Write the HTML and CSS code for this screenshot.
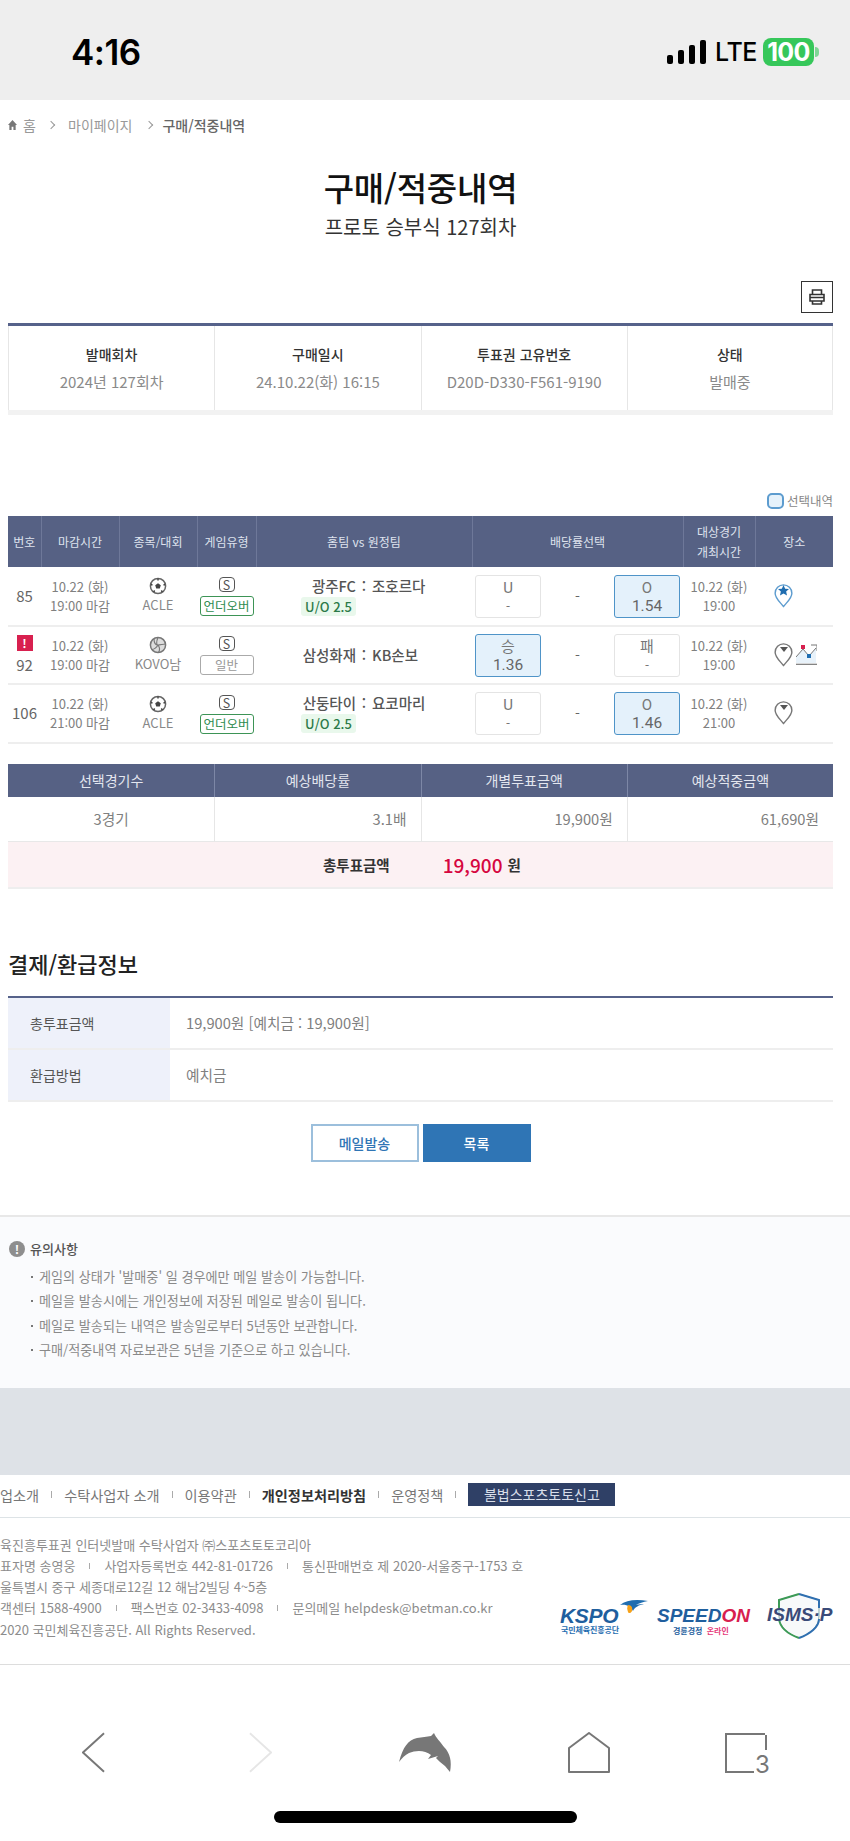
FILE: index.html
```html
<!DOCTYPE html>
<html lang="ko">
<head>
<meta charset="utf-8">
<title>구매/적중내역</title>
<link rel="stylesheet" href="styles.css">
</head>
<body>
<svg class="defs" width="0" height="0" aria-hidden="true">
  <symbol id="ball" viewBox="0 0 18 18">
    <circle cx="9" cy="9" r="7.6" fill="#fff" stroke="#666" stroke-width="1.5"/>
    <path d="M9 6.2l2.8 2-1 3.2H7.2l-1-3.2z" fill="#444"/>
    <path d="M9 1.6v1.8M1.8 7.5l1.7.5M16.2 7.5l-1.7.5M4.6 15l1.1-1.5M13.4 15l-1.1-1.5" stroke="#444" stroke-width="1.5"/>
  </symbol>
  <symbol id="pin" viewBox="0 0 20 25">
    <path d="M10 23.5C6 18.5 1.2 15 1.2 9.6a8.8 8.8 0 0 1 17.6 0C18.800 15 14 18.500 10 23.5z" fill="#fff" stroke="currentColor" stroke-width="1.5"/>
  </symbol>
</svg>

<header class="status">
  <span class="clock">4:16</span>
  <div class="status-right">
    <span class="signal"><i class="b1"></i><i class="b2"></i><i class="b3"></i><i class="b4"></i></span>
    <span class="lte">LTE</span>
    <span class="battery">100</span>
    <span class="nub"></span>
  </div>
</header>

<main class="page">
  <nav class="crumbs">
    <svg class="home" viewBox="0 0 10 11"><path d="M5 0l5 5.500H8.500V11H6V7.500H4V11H1.500V5.500H0z" fill="#777"/></svg>
    <span class="crumb-home">홈</span>
    <span class="chev"></span>
    <span>마이페이지</span>
    <span class="chev chev-2"></span>
    <strong>구매/적중내역</strong>
  </nav>

  <h1 class="title">구매/적중내역</h1>
  <p class="subtitle">프로토 승부식 127회차</p>

  <div class="print-row">
    <button class="print" aria-label="인쇄">
      <svg viewBox="0 0 18 18" width="18" height="18"><path d="M4.500 6V2h9v4M2 6.500h14V13H2zM2 9.500h14M4.500 13v3h9v-3" fill="none" stroke="#333" stroke-width="1.600"/></svg>
    </button>
  </div>

  <section class="info">
    <div class="info-cell"><b>발매회차</b><span>2024년 127회차</span></div>
    <div class="info-cell"><b>구매일시</b><span>24.10.22(화) 16:15</span></div>
    <div class="info-cell"><b>투표권 고유번호</b><span>D20D-D330-F561-9190</span></div>
    <div class="info-cell"><b>상태</b><span>발매중</span></div>
  </section>

  <div class="legend"><i class="legend-box"></i>선택내역</div>

  <table class="games">
    <colgroup>
      <col class="c1"><col class="c2"><col class="c3"><col class="c4"><col class="c5"><col class="c6"><col class="c7"><col class="c8">
    </colgroup>
    <thead>
      <tr><th>번호</th><th>마감시간</th><th>종목/대회</th><th>게임유형</th><th>홈팀 vs 원정팀</th><th>배당률선택</th><th>대상경기<br>개최시간</th><th>장소</th></tr>
    </thead>
    <tbody>
      <tr>
        <td class="num">85</td>
        <td>10.22 (화)<br>19:00 마감</td>
        <td class="sport"><svg class="sport-icon"><use href="#ball"/></svg><span>ACLE</span></td>
        <td class="type"><span class="s-mark">S</span><span class="tag tag-green">언더오버</span></td>
        <td class="match">
          <div class="teams strong-line"><span class="home-team">광주FC</span><span class="colon">:</span><span>조호르다</span></div>
          <span class="uo">U/O 2.5</span>
        </td>
        <td><div class="odds"><div class="odd"><span>U</span><small>-</small></div><span class="dash">-</span><div class="odd on"><span>O</span><em>1.54</em></div></div></td>
        <td>10.22 (화)<br>19:00</td>
        <td class="place"><svg class="pin blue"><use href="#pin"/></svg><svg class="star" viewBox="0 0 10 10"><path d="M5 0l1.500 3.300 3.500.4-2.600 2.300.8 3.500L5 7.700 1.800 9.500l.8-3.500L0 3.700l3.500-.4z" fill="#1f6db0"/></svg></td>
      </tr>
      <tr>
        <td class="num"><span class="alert">!</span>92</td>
        <td>10.22 (화)<br>19:00 마감</td>
        <td class="sport">
          <svg class="sport-icon" viewBox="0 0 18 18"><circle cx="9" cy="9" r="7.600" fill="#ddd" stroke="#777" stroke-width="1.500"/><path d="M9 1.500C7 6 7.500 9 9 9s6-1 7.500-1M9 9c-1 2-4 5-6.500 4.500M9 9c1.500 2 2 5 .5 7.500M5 3c0 3 1 6 4 6" fill="none" stroke="#777" stroke-width="1.100"/></svg>
          <span>KOVO남</span>
        </td>
        <td class="type"><span class="s-mark">S</span><span class="tag tag-gray">일반</span></td>
        <td class="match"><div class="teams"><span class="home-team">삼성화재</span><span class="colon">:</span><span>KB손보</span></div></td>
        <td><div class="odds"><div class="odd on"><span>승</span><em>1.36</em></div><span class="dash">-</span><div class="odd"><span>패</span><small>-</small></div></div></td>
        <td>10.22 (화)<br>19:00</td>
        <td class="place">
          <svg class="pin"><use href="#pin"/></svg><svg class="tri" viewBox="0 0 8 5"><path d="M0 0h8L4 5z" fill="#555"/></svg>
          <svg class="chart" viewBox="0 0 21 21"><path d="M0 19V13L7 5l6 7 7-8v15z" fill="#e8f2fa"/><path d="M0 13L7 5l6 7 7-8M15 1h6v6" fill="none" stroke="#777" stroke-width="1"/><path d="M0 20.300h21" stroke="#777" stroke-width="1.200"/><rect x="5" y="1" width="4" height="4" fill="#d8204f"/><rect x="11" y="10" width="4" height="4" fill="#1f6db0"/></svg>
        </td>
      </tr>
      <tr>
        <td class="num">106</td>
        <td>10.22 (화)<br>21:00 마감</td>
        <td class="sport"><svg class="sport-icon"><use href="#ball"/></svg><span>ACLE</span></td>
        <td class="type"><span class="s-mark">S</span><span class="tag tag-green">언더오버</span></td>
        <td class="match">
          <div class="teams strong-line"><span class="home-team">산둥타이</span><span class="colon">:</span><span>요코마리</span></div>
          <span class="uo">U/O 2.5</span>
        </td>
        <td><div class="odds"><div class="odd"><span>U</span><small>-</small></div><span class="dash">-</span><div class="odd on"><span>O</span><em>1.46</em></div></div></td>
        <td>10.22 (화)<br>21:00</td>
        <td class="place"><svg class="pin"><use href="#pin"/></svg><svg class="tri" viewBox="0 0 8 5"><path d="M0 0h8L4 5z" fill="#555"/></svg></td>
      </tr>
    </tbody>
  </table>

  <section class="summary">
    <div class="sum-head">선택경기수</div><div class="sum-head">예상배당률</div><div class="sum-head">개별투표금액</div><div class="sum-head">예상적중금액</div>
    <div class="sum-val center">3경기</div><div class="sum-val">3.1배</div><div class="sum-val">19,900원</div><div class="sum-val">61,690원</div>
    <div class="total"><b class="total-label">총투표금액</b><span class="total-num">19,900</span><b>원</b></div>
  </section>

  <h2 class="sec-title">결제/환급정보</h2>
  <section class="pay">
    <div class="pay-label">총투표금액</div><div class="pay-val">19,900원 [예치금 : 19,900원]</div>
    <div class="pay-label">환급방법</div><div class="pay-val">예치금</div>
  </section>

  <div class="actions">
    <button class="btn btn-line">메일발송</button>
    <button class="btn btn-fill">목록</button>
  </div>
</main>

<section class="notice">
  <h3 class="notice-title"><i class="notice-icon">!</i>유의사항</h3>
  <ul class="notice-list">
    <li>게임의 상태가 '발매중' 일 경우에만 메일 발송이 가능합니다.</li>
    <li>메일을 발송시에는 개인정보에 저장된 메일로 발송이 됩니다.</li>
    <li>메일로 발송되는 내역은 발송일로부터 5년동안 보관합니다.</li>
    <li>구매/적중내역 자료보관은 5년을 기준으로 하고 있습니다.</li>
  </ul>
</section>

<div class="gap"></div>

<footer class="footer">
  <nav class="foot-nav">
    <span>업소개</span><i></i><span>수탁사업자 소개</span><i></i><span>이용약관</span><i></i><b>개인정보처리방침</b><i></i><span>운영정책</span><i></i>
    <span class="report">불법스포츠토토신고</span>
  </nav>
  <div class="foot-body">
    <div class="foot-text">
      <p>육진흥투표권 인터넷발매 수탁사업자 ㈜스포츠토토코리아</p>
      <p>표자명 송영웅<i></i>사업자등록번호 442-81-01726<i></i>통신판매번호 제 2020-서울중구-1753 호</p>
      <p>울특별시 중구 세종대로12길 12 해남2빌딩 4~5층</p>
      <p>객센터 1588-4900<i></i>팩스번호 02-3433-4098<i></i>문의메일 helpdesk@betman.co.kr</p>
      <p>2020 국민체육진흥공단. All Rights Reserved.</p>
    </div>
    <div class="logos">
      <div class="kspo">
        <svg class="kspo-wing" viewBox="0 0 28 14"><path d="M0 6C6 1 16 0 28 2c-5 1-9 2-12 4 3-1 6-1 8-1-5 1-9 3-11 7C11 8 7 5 0 6z" fill="#1f6db0"/><path d="M8 6c3 0 5 2 4 6-1 2-3 3-4 1-1-3-1-5 0-7z" fill="#f6a21a"/></svg>
        <span class="kspo-name">KSPO</span>
        <span class="kspo-sub">국민체육진흥공단</span>
      </div>
      <div class="speedon">
        <span class="speedon-name">SPEED<em>ON</em></span>
        <span class="speedon-sub">경륜경정 <em>온라인</em></span>
      </div>
      <div class="isms">
        <svg class="shield" viewBox="0 0 44 46"><path d="M22 1l20 6v16c0 11-9 18-20 22C11 41 2 34 2 23V7z" fill="#f7f9fa" stroke="#8aa" stroke-width="1"/><path d="M22 1l20 6v8" fill="none" stroke="#2f6fb0" stroke-width="2"/><path d="M2 15V7l20-6M2 26c1 9 9 15 20 19" fill="none" stroke="#3c9a56" stroke-width="2"/><path d="M22 45c11-4 20-11 20-19" fill="none" stroke="#2f6fb0" stroke-width="2"/></svg>
        <span class="isms-name">ISMS·P</span>
      </div>
    </div>
  </div>
</footer>

<nav class="browser">
  <svg class="tool tool-back" viewBox="0 0 24 42"><path d="M23 1L1 21l22 20" fill="none" stroke="#777" stroke-width="2"/></svg>
  <svg class="tool tool-fwd" viewBox="0 0 24 42"><path d="M1 1l22 20L1 41" fill="none" stroke="#e6e6e6" stroke-width="2"/></svg>
  <svg class="tool tool-dolphin" viewBox="0 0 54 39"><path d="M1 29C5 14 10 7 19 5c5-1 10-1 14-2l3-3c2 5 6 8 10 14 6 6 8 14 6 25l-5-6c-4-3-7-6-9-8l2-2-10 3 3-4c-6-5-15-5-22-2-4 2-7 5-10 9z" fill="#777"/></svg>
  <svg class="tool tool-home" viewBox="0 0 42 41"><path d="M21 1L1 16v24h40V16z" fill="none" stroke="#777" stroke-width="2" stroke-linejoin="round"/></svg>
  <div class="tool-tabs"><span class="tabs-num">3</span></div>
</nav>
<div class="indicator-row"><span class="indicator"></span></div>
</body>
</html>
```

FILE: styles.css
```css
* { box-sizing: border-box; }
html, body { margin: 0; padding: 0; }
body {
  width: 850px;
  height: 1841px;
  overflow: hidden;
  background: #fff;
  font-family: "Noto Sans CJK KR", "Noto Sans", sans-serif;
  color: #777;
  font-size: 13px;
}
.defs { position: absolute; }
p, h1, h2, h3, ul { margin: 0; padding: 0; }
button { font-family: inherit; cursor: pointer; }

/* status bar */
.status {
  height: 100px;
  background: #eeeeee;
  display: flex;
  justify-content: space-between;
  padding: 38px 31px 0 71px;
  color: #000;
}
.clock { font: 600 35px/28px Inter, sans-serif; letter-spacing: -0.5px; }
.status-right { display: flex; align-items: flex-start; height: 28px; }
.signal { display: flex; align-items: flex-end; gap: 5px; height: 24px; margin-top: 2px; width: 39px; }
.signal i { display: block; width: 6px; background: #000; border-radius: 2px; }
.b1 { height: 9px; }
.b2 { height: 14px; }
.b3 { height: 19px; }
.b4 { height: 24px; }
.lte { font: 500 25px/28px Inter, sans-serif; margin-left: 9px; width: 48px; letter-spacing: -0.4px; }
.battery {
  width: 51px; height: 28px; background: #36c75a; border-radius: 8px;
  color: #fff; font: 700 25px/28px Inter, sans-serif; text-align: center; letter-spacing: -0.6px;
}
.nub { width: 4px; height: 10px; margin-top: 9px; margin-left: 1px; background: #7fd695; border-radius: 0 4px 4px 0; }

/* page */
.page { padding: 0 17px 0 8px; }
.crumbs { height: 50px; display: flex; align-items: center; font-size: 14px; color: #999; }
.crumbs strong { font-weight: 500; color: #666; }
.home { width: 9px; height: 10px; margin-right: 6px; }
.crumb-home { width: 13px; }
.chev {
  width: 6px; height: 6px; border-top: 1px solid #999; border-right: 1px solid #999;
  transform: rotate(45deg); margin: 0 14px 0 12px;
}
.chev-2 { margin: 0 10px 0 14px; }
.title { font-size: 33px; line-height: 40px; font-weight: 500; color: #111; text-align: center; margin-top: 17px; letter-spacing: -0.2px; }
.subtitle { font-size: 20px; line-height: 28px; color: #333; text-align: center; margin-top: 6px; }
.print-row { display: flex; justify-content: flex-end; margin-top: 40px; }
.print {
  width: 32px; height: 32px; padding: 0; background: #fff; border: 1px solid #333;
  display: flex; align-items: center; justify-content: center;
}
.info {
  margin-top: 10px; display: grid; grid-template-columns: repeat(4, 1fr);
  border-top: 3px solid #56628a; border-bottom: 5px solid #f2f2f2; height: 92px;
}
.info-cell {
  border-left: 1px solid #e6e6e6; display: flex; flex-direction: column; align-items: center;
  padding-top: 17px;
}
.info-cell:last-child { border-right: 1px solid #e6e6e6; }
.info-cell b { font-size: 14px; line-height: 22px; font-weight: 500; color: #333; }
.info-cell span { font-size: 15px; line-height: 22px; color: #8a8a8a; margin-top: 6px; }
.legend {
  margin-top: 78px; height: 16px; display: flex; justify-content: flex-end; align-items: center;
  font-size: 12.5px; color: #888; line-height: 16px;
}
.legend-box {
  width: 17px; height: 16px; border: 2px solid #5d9ccf; background: #e6f2fb; border-radius: 5px; margin-right: 3px;
}

/* games table */
.games { width: 825px; table-layout: fixed; border-collapse: collapse; margin-top: 7px; font-size: 13px; line-height: 19px; }
.c1 { width: 33px; } .c2 { width: 78px; } .c3 { width: 78px; } .c4 { width: 59px; }
.c5 { width: 216px; } .c6 { width: 211px; } .c7 { width: 72px; } .c8 { width: 78px; }
.games th {
  height: 51px; background: #566184; color: #dfe3ee; font-weight: 400; font-size: 12px; line-height: 20px;
  border-left: 1px solid #6e7899; padding: 0;
}
.games th:first-child { border-left: 0; }
.games td { height: 58.500px; padding: 0; text-align: center; border-bottom: 2px solid #eeeeee; color: #808080; }
.games td.num { font-size: 15px; color: #666; line-height: 20px; }
.alert {
  display: block; width: 16px; height: 16px; background: #d8204f; color: #fff; font-weight: 700; font-size: 12px;
  line-height: 16px; margin: 0 auto 4px;
}
.sport-icon { display: block; width: 18px; height: 18px; margin: 0 auto 1px; }
.sport span { display: block; line-height: 18px; color: #888; }
.games td.type { line-height: 0; padding-top: 2px; }
.s-mark {
  display: block; width: 16px; height: 15px; margin: 0 auto 4px; border: 1px solid #555; border-radius: 4px;
  font-size: 12.5px; line-height: 13px; color: #555;
}
.tag { display: block; width: 54px; height: 20px; margin: 0 auto; border-radius: 3px; font-size: 12.5px; line-height: 17px; background: #fff; }
.tag-green { border: 1.500px solid #3d9456; color: #2e8b50; }
.tag-gray { border: 1.500px solid #aaaaaa; color: #999; }
.teams { display: grid; grid-template-columns: 1fr 16px 1fr; font-size: 14.5px; font-weight: 500; color: #555; line-height: 20px; text-align: left; }
.home-team { text-align: right; }
.colon { text-align: center; }
.uo {
  display: block; width: 55px; height: 19px; margin: 1px 0 0 45px; background: #e9f8ec; color: #2c7a49; border-radius: 3px;
  font-size: 13px; font-weight: 500; line-height: 19px; text-align: center;
}
.odds { display: flex; justify-content: space-between; align-items: center; padding: 1px 3px 0; }
.odd {
  width: 66px; height: 43px; border: 1px solid #e4e4e4; border-radius: 3px; background: #fff;
  display: flex; flex-direction: column; align-items: center; color: #777;
  font-family: Roboto, "Noto Sans CJK KR", sans-serif; font-size: 15px; line-height: 18px; padding-top: 3px;
}
.odd small { font-size: 13px; line-height: 16px; margin-top: 1px; }
.odd em { font-style: normal; line-height: 18px; font-size: 15.500px; color: #666; }
.odd.on { border: 1.500px solid #4f94c8; background: #e4f1fb; }
.dash { color: #666; font-size: 14px; }
.games td.place { position: relative; text-align: left; padding-left: 19px; line-height: 0; font-size: 0; }
.pin { display: inline-block; width: 19px; height: 24px; color: #777; vertical-align: middle; }
.pin.blue { color: #5d9ccf; }
.star { position: absolute; left: 23px; top: 18px; width: 11px; height: 11px; }
.tri { position: absolute; left: 25px; top: 20px; width: 8px; height: 5px; }
.chart { width: 21px; height: 21px; margin-left: 3px; vertical-align: middle; }

/* summary */
.summary { margin-top: 20px; display: grid; grid-template-columns: repeat(4, 1fr); }
.sum-head {
  height: 33px; background: #566184; color: #e3e6ef; font-size: 14px; line-height: 33px; text-align: center;
  border-left: 1px solid #7d87a6;
}
.sum-head:first-child { border-left: 0; }
.sum-val {
  height: 45px; line-height: 44px; font-size: 14.700px; text-align: right; padding-right: 14px; color: #808080;
  border-left: 1px solid #e6e6e6; border-bottom: 1px solid #e8e8e8;
}
.sum-val.center { text-align: center; padding-right: 0; border-left: 0; }
.total {
  grid-column: 1 / -1; height: 47px; background: #fcf1f3; border-bottom: 2px solid #eeeeee;
  display: flex; align-items: center; padding-left: 315px; font-size: 14.500px; color: #333;
}
.total b { font-weight: 700; }
.total-num { color: #d6063f; font-size: 19px; font-weight: 500; margin: 0 5px 0 53px; }

/* payment */
.sec-title { margin-top: 59px; font-size: 22px; line-height: 30px; font-weight: 500; color: #222; }
.pay { margin-top: 18px; display: grid; grid-template-columns: 162px 1fr; border-top: 2px solid #56628a; }
.pay-label, .pay-val { height: 52px; line-height: 50px; font-size: 14px; border-bottom: 2px solid #eeeeee; }
.pay-label { background: #eef1fa; color: #555; padding-left: 22px; }
.pay-val { color: #808080; padding-left: 16px; font-size: 14.700px; }
.actions { margin-top: 22px; display: flex; justify-content: center; gap: 4px; }
.btn { width: 108px; height: 38px; font-size: 14px; font-weight: 500; padding: 0; }
.btn-line { background: #fff; border: 2px solid #9cbfdc; color: #2f75b5; }
.btn-fill { background: #2f75b5; border: 0; color: #fff; }

/* notice */
.notice { margin-top: 53px; height: 173px; background: #fafbfd; border-top: 2px solid #e8e8e8; padding: 22px 0 0 9px; }
.notice-title { display: flex; align-items: center; font-size: 13px; line-height: 20px; font-weight: 500; color: #555; }
.notice-icon {
  width: 16px; height: 16px; border-radius: 50%; background: #8e8e8e; color: #fff; font-size: 12px; font-style: normal;
  font-weight: 700; line-height: 16px; text-align: center; margin-right: 5px;
}
.notice-list { list-style: none; margin-top: 6px; }
.notice-list li { position: relative; padding-left: 30px; font-size: 13.100px; line-height: 24.600px; color: #8a8a8a; }
.notice-list li::before {
  content: ""; position: absolute; left: 22px; top: 11px; width: 2px; height: 2px; background: #777;
}
.gap { height: 87px; background: #dee2e7; }

/* footer */
.foot-nav {
  height: 43px; display: flex; align-items: center; border-bottom: 1px solid #dde3e6; font-size: 14.200px; color: #777; padding-bottom: 2px;
}
.foot-nav i { display: block; width: 1px; height: 7px; background: #aaa; margin: 0 12px; }
.foot-nav b { font-weight: 700; color: #333; }
.report {
  width: 147px; height: 23px; background: #2f4066; color: #d8deea; text-align: center; line-height: 23px; font-size: 14px; margin-left: 0;
}
.foot-body { height: 147px; border-bottom: 1px solid #dddddd; display: flex; justify-content: space-between; position: relative; }
.foot-text { padding-top: 16px; font-size: 13px; line-height: 21.300px; color: #8c8c8c; white-space: nowrap; }
.foot-text i { display: inline-block; width: 1px; height: 6px; background: #aaa; margin: 0 14px; vertical-align: 2px; }
.logos { position: absolute; left: 560px; top: 80px; width: 275px; height: 50px; }
.kspo, .speedon, .isms { position: absolute; top: 0; }
.kspo { left: 0; top: 0; width: 90px; }
.kspo-wing { position: absolute; left: 60px; top: 1px; width: 28px; height: 14px; }
.kspo-name { position: absolute; left: 0; top: 8px; font: italic 700 21px/20px "Liberation Sans", sans-serif; color: #1f5f9e; letter-spacing: -0.3px; }
.kspo-sub { position: absolute; left: 1px; top: 27px; font-size: 8px; line-height: 10px; color: #1f6db0; font-weight: 700; white-space: nowrap; letter-spacing: -0.1px; }
.speedon { left: 97px; width: 95px; }
.speedon-name { position: absolute; left: 0; top: 8px; font: italic 700 19px/20px "Liberation Sans", sans-serif; color: #1f5f9e; white-space: nowrap; }
.speedon-name em { color: #d8204f; font-style: italic; }
.speedon-sub { position: absolute; left: 16px; top: 28px; font-size: 8px; line-height: 10px; font-weight: 700; color: #1f5f9e; white-space: nowrap; }
.speedon-sub em { color: #e6397a; font-style: normal; margin-left: 2px; }
.isms { left: 217px; top: -5px; width: 44px; height: 46px; }
.shield { position: absolute; left: 0; top: 0; width: 44px; height: 46px; }
.isms-name { position: absolute; left: -10px; top: 11px; font: italic 700 19px/22px "Liberation Sans", sans-serif; color: #3a4a78; white-space: nowrap; }

/* browser toolbar */
.browser { position: relative; height: 146px; }
.tool { position: absolute; }
.tool-back { left: 82px; top: 66px; width: 23px; height: 43px; }
.tool-fwd { left: 249px; top: 66px; width: 23px; height: 43px; }
.tool-dolphin { left: 398px; top: 68px; width: 54px; height: 39px; }
.tool-home { left: 568px; top: 67px; width: 42px; height: 41px; }
.tool-tabs { position: absolute; left: 725px; top: 68px; width: 40px; height: 40px; border-top: 2px solid #777; border-left: 2px solid #777; }
.tool-tabs::before { content: ""; position: absolute; right: -2px; top: 0; width: 2px; height: 15px; background: #777; }
.tool-tabs::after { content: ""; position: absolute; left: 0; bottom: 0; width: 27px; height: 2px; background: #777; }
.tabs-num { position: absolute; left: 28px; top: 18px; font: 400 24px/24px Inter, sans-serif; color: #777; }
.indicator-row { position: absolute; left: 274px; top: 1811px; }
.indicator { display: block; width: 303px; height: 12px; background: #000; border-radius: 6px; }
```
